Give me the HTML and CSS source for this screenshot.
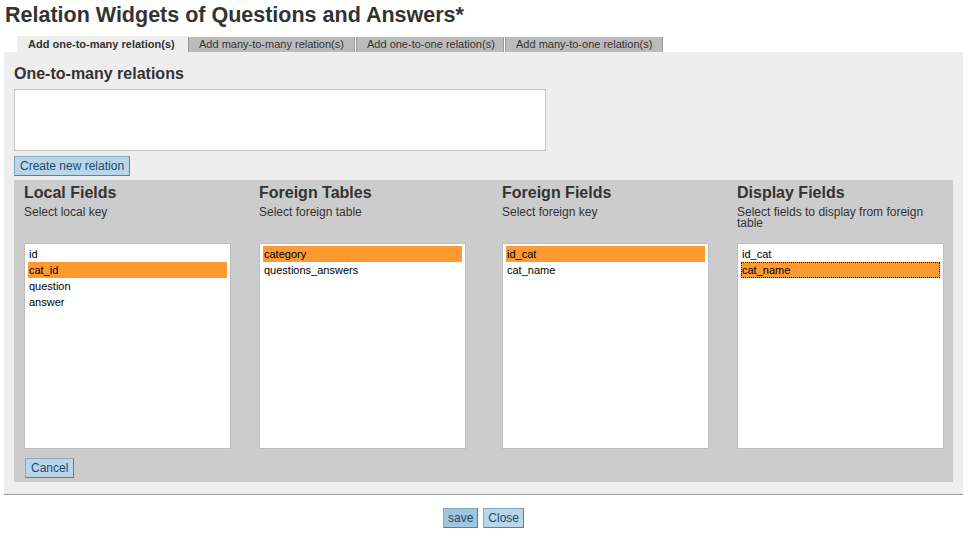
FILE: index.html
```html
<!DOCTYPE html>
<html>
<head>
<meta charset="utf-8">
<link rel="stylesheet" href="styles.css">
</head>
<body>
<h1 class="title">Relation Widgets of Questions and Answers*</h1>
<div class="tabs">
  <div class="tab active">Add one-to-many relation(s)</div>
  <div class="tab t2">Add many-to-many relation(s)</div>
  <div class="tab t3">Add one-to-one relation(s)</div>
  <div class="tab t4">Add many-to-one relation(s)</div>
</div>
<div class="panel">
  <h2 class="section-title">One-to-many relations</h2>
  <div class="relations-box"></div>
  <button class="btn">Create new relation</button>
  <div class="editor">
    <div class="columns">
      <div class="col">
        <h3 class="col-title">Local Fields</h3>
        <div class="col-desc">Select local key</div>
        <div class="list">
          <div class="item">id</div>
          <div class="item sel">cat_id</div>
          <div class="item">question</div>
          <div class="item">answer</div>
        </div>
      </div>
      <div class="col">
        <h3 class="col-title">Foreign Tables</h3>
        <div class="col-desc">Select foreign table</div>
        <div class="list">
          <div class="item sel">category</div>
          <div class="item">questions_answers</div>
        </div>
      </div>
      <div class="col">
        <h3 class="col-title">Foreign Fields</h3>
        <div class="col-desc">Select foreign key</div>
        <div class="list">
          <div class="item sel">id_cat</div>
          <div class="item">cat_name</div>
        </div>
      </div>
      <div class="col">
        <h3 class="col-title">Display Fields</h3>
        <div class="col-desc">Select fields to display from foreign table</div>
        <div class="list">
          <div class="item">id_cat</div>
          <div class="item sel focus">cat_name</div>
        </div>
      </div>
    </div>
    <button class="btn cancel">Cancel</button>
  </div>
</div>
<div class="actions">
  <button class="btn save">save</button>
  <button class="btn close">Close</button>
</div>
</body>
</html>
```
FILE: styles.css
```css
html, body {
  margin: 0;
  padding: 0;
  background: #fff;
  font-family: "Liberation Sans", Arial, Helvetica, sans-serif;
  color: #333;
}
.title {
  margin: 3px 0 0 5px;
  font-size: 21.5px;
  line-height: 24px;
  font-weight: bold;
  color: #333;
}
.tabs {
  display: flex;
  margin-top: 9px;
  padding-left: 17px;
  height: 16px;
  align-items: flex-end;
}
.tab {
  box-sizing: border-box;
  white-space: nowrap;
  font-size: 11px;
  line-height: 15px;
  height: 15px;
  background: #bbb;
  border-left: 1px solid #999;
  border-right: 1px solid #999;
  color: #333;
  padding: 0 0 0 10px;
}
.tab.active {
  background: #eee;
  font-weight: bold;
  height: 16px;
  line-height: 16px;
  border: none;
  width: 171px;
  padding-left: 11px;
}
.tab.t2 { width: 167px; }
.tab.t3 { width: 148px; margin-left: 1px; }
.tab.t4 { width: 158px; margin-left: 1px; }
.panel {
  margin: 0 5px 0 4px;
  background: #eee;
  padding: 13px 10px 12px 10px;
  border-bottom: 1px solid #999;
}
.section-title {
  margin: 0;
  font-size: 16px;
  line-height: 18px;
  font-weight: bold;
  color: #333;
}
.relations-box {
  margin-top: 6px;
  width: 530px;
  height: 60px;
  background: #fff;
  border: 1px solid #c4c4c4;
}
.btn {
  display: block;
  font-family: "Liberation Sans", Arial, Helvetica, sans-serif;
  font-size: 12px;
  line-height: 18px;
  height: 20px;
  padding: 0 5px;
  background: #b8d6e8;
  color: #1f4a6b;
  border: 1px solid #8aa9bd;
  border-right-color: #5f7f94;
  border-bottom-color: #5f7f94;
  border-radius: 0;
  margin: 0;
}
.panel > .btn {
  margin-top: 5px;
}
.editor {
  margin-top: 4px;
  background: #ccc;
  padding: 3px 10px 4px 10px;
}
.columns {
  display: grid;
  grid-template-columns: 235px 243px 235px 1fr;
}
.col-title {
  margin: 0;
  font-size: 16px;
  line-height: 20px;
  font-weight: bold;
  color: #333;
}
.col-desc {
  margin-top: 4px;
  font-size: 12px;
  line-height: 11px;
  min-height: 24px;
  padding-right: 10px;
}
.list {
  margin-top: 12px;
  width: 199px;
  height: 200px;
  background: #fff;
  border: 1px solid #bdbdbd;
  padding: 2px 3px;
}
.item {
  font-size: 11px;
  line-height: 16px;
  height: 16px;
  color: #000;
  padding-left: 1px;
  box-sizing: border-box;
}
.item.sel {
  background: #ff9a33;
}
.item.focus {
  outline: 1px dotted #000;
  outline-offset: -1px;
}
.btn.cancel {
  margin-top: 9px;
  margin-left: 1px;
}
.actions {
  display: flex;
  justify-content: center;
  gap: 5px;
  margin-top: 13px;
  padding-right: 1px;
}
.btn.save,
.btn.close {
  padding: 0 4px;
}
.btn.save {
  background: #9ec4de;
}
```
